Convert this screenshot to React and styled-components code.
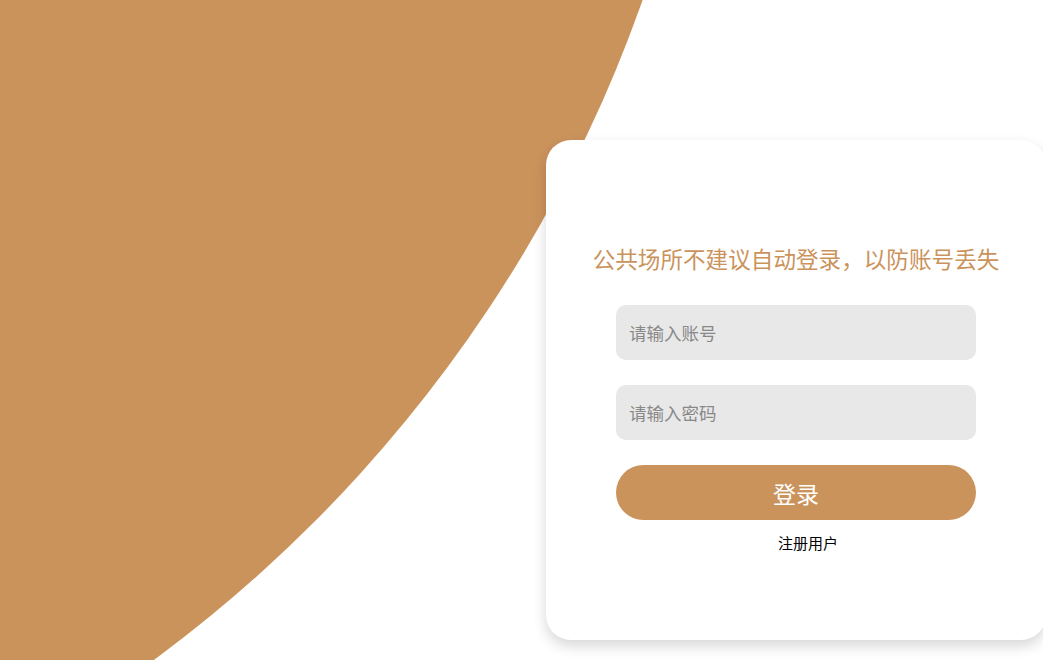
import React from "react";
import styled, { createGlobalStyle } from "styled-components";

const Global = createGlobalStyle`
  html, body { margin: 0; padding: 0; height: 100%; overflow: hidden; background: #fff; }
  body { font-family: "Microsoft YaHei", "Noto Sans CJK SC", "Noto Sans", sans-serif; }
  * { box-sizing: border-box; }
`;

const Page = styled.div`
  position: relative;
  width: 100vw;
  height: 100vh;
  overflow: hidden;
  display: flex;
  justify-content: flex-end;
  align-items: flex-start;
  padding-top: 140px;
`;

const Blob = styled.div`
  position: absolute;
  left: -2070px;
  top: -1860px;
  width: 2792px;
  height: 2792px;
  border-radius: 50%;
  background: #cb935c;
  z-index: 0;
`;

const Card = styled.div`
  position: relative;
  z-index: 1;
  width: 500px;
  height: 500px;
  margin-right: -3px;
  background: #fff;
  border-radius: 25px;
  box-shadow: 0 6px 14px rgba(0, 0, 0, 0.16);
  display: flex;
  flex-direction: column;
  align-items: center;
  padding-top: 104px;
`;

const Title = styled.h2`
  margin: 0 0 31px;
  font-size: 22.6px;
  line-height: 30px;
  font-weight: 400;
  color: #cb935c;
  text-align: center;
  white-space: nowrap;
`;

const Input = styled.input`
  width: 360px;
  height: 55px;
  border: none;
  outline: none;
  border-radius: 10px;
  background: #e8e8e8;
  padding: 0 13px;
  margin-bottom: 25px;
  font-family: inherit;
  font-size: 17.5px;
  color: #333;
  &::placeholder { color: #888; }
`;

const Button = styled.button`
  width: 360px;
  height: 55px;
  border: none;
  border-radius: 28px;
  background: #cb935c;
  color: #fff;
  font-family: inherit;
  font-size: 23px;
  cursor: pointer;
`;

const Register = styled.a`
  margin-top: 13px;
  padding-left: 24px;
  font-size: 15px;
  line-height: 20px;
  color: #000;
  text-decoration: none;
  cursor: pointer;
`;

export default function App() {
  return (
    <>
      <Global />
      <Page>
        <Blob />
        <Card>
          <Title>公共场所不建议自动登录，以防账号丢失</Title>
          <Input placeholder="请输入账号" />
          <Input type="password" placeholder="请输入密码" />
          <Button>登录</Button>
          <Register>注册用户</Register>
        </Card>
      </Page>
    </>
  );
}
